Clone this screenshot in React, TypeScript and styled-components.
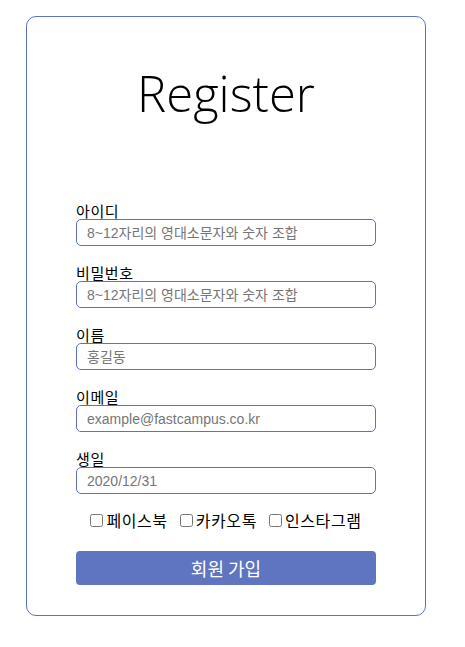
import React from 'react';
import styled, {createGlobalStyle} from "styled-components";

const GlobalStyle = createGlobalStyle`
  body {
    margin: 0;
    font-family: "Liberation Sans", "Noto Sans CJK KR", sans-serif;
    background: #fff;
  }
`

type FieldPropsType = {
    label: string
    placeholder: string
    type?: string
}

const Field = (props: FieldPropsType) => {
    const {label, placeholder, type} = props
    return (
        <FieldWrapper>
            <Label>{label}</Label>
            <Input type={type || 'text'} placeholder={placeholder}/>
        </FieldWrapper>
    )
}

const App = () => {
    return (
        <Page>
            <GlobalStyle/>
            <Card>
                <Title>Register</Title>
                <Form onSubmit={e => e.preventDefault()}>
                    <Field label='아이디' placeholder='8~12자리의 영대소문자와 숫자 조합'/>
                    <Field label='비밀번호' placeholder='8~12자리의 영대소문자와 숫자 조합' type='password'/>
                    <Field label='이름' placeholder='홍길동'/>
                    <Field label='이메일' placeholder='example@fastcampus.co.kr'/>
                    <Field label='생일' placeholder='2020/12/31'/>
                    <Checks>
                        <CheckLabel><input type='checkbox'/>페이스북</CheckLabel>
                        <CheckLabel><input type='checkbox'/>카카오톡</CheckLabel>
                        <CheckLabel><input type='checkbox'/>인스타그램</CheckLabel>
                    </Checks>
                    <Button type='submit'>회원 가입</Button>
                </Form>
            </Card>
        </Page>
    );
};

export default App;

const Page = styled.div`
  padding: 16px 0 0 26px;
`

const Card = styled.div`
  box-sizing: border-box;
  width: 400px;
  height: 600px;
  border: 1px solid #5c70c8;
  border-radius: 10px;
  padding: 0 49px;
`

const Title = styled.h1`
  margin: 45px 0 78px;
  text-align: center;
  font-family: "Open Sans", sans-serif;
  font-weight: 300;
  font-size: 49px;
  line-height: 62px;
  color: #000;
`

const Form = styled.form`
  display: flex;
  flex-direction: column;
`

const FieldWrapper = styled.div`
  display: flex;
  flex-direction: column;
  margin-bottom: 18px;
`

const Label = styled.label`
  font-family: "Noto Sans CJK KR", sans-serif;
  font-size: 15px;
  letter-spacing: 0.6px;
  line-height: 17px;
  color: #000;
`

const Input = styled.input`
  box-sizing: border-box;
  width: 300px;
  height: 27px;
  border: 1px solid #5c70c8;
  border-radius: 5px;
  padding: 0 10px;
  font-family: "Liberation Sans", "Noto Sans CJK KR", sans-serif;
  font-size: 14px;
  outline: none;

  &::placeholder {
    color: #767676;
  }
`

const Checks = styled.div`
  display: flex;
  justify-content: center;
  gap: 12px;
  margin: -2px 0 21px;
`

const CheckLabel = styled.label`
  display: flex;
  align-items: center;
  font-family: "Noto Sans CJK KR", sans-serif;
  font-size: 16px;
  letter-spacing: 0.6px;
  line-height: 20px;
  color: #000;

  input {
    margin: 0 3px 0 0;
    width: 13px;
    height: 13px;
  }
`

const Button = styled.button`
  width: 300px;
  height: 34px;
  border: none;
  border-radius: 4px;
  background: #5f75bf;
  color: #fff;
  font-family: "Noto Sans CJK KR", sans-serif;
  font-size: 18px;
  cursor: pointer;
`
